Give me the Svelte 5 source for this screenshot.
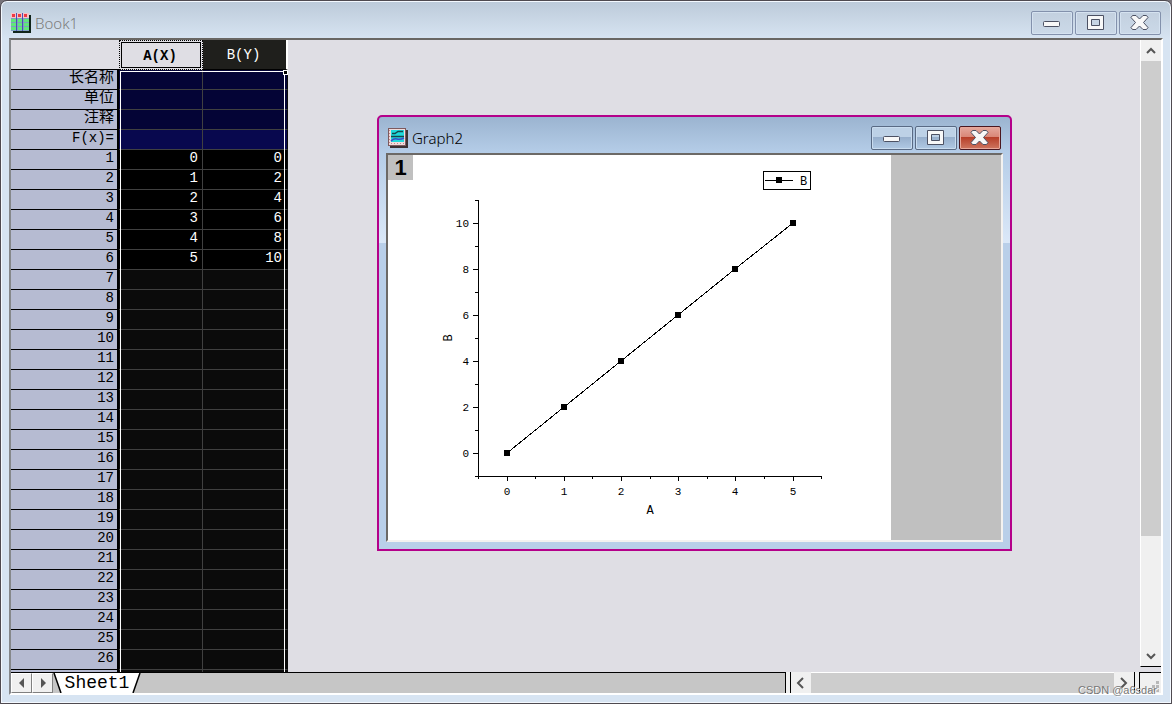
<script>
  const labels = ['长名称', '单位', '注释', 'F(x)='];
  const points = [[0, 0], [1, 2], [2, 4], [3, 6], [4, 8], [5, 10]];
  const rows = Array.from({ length: 26 }, (_, i) => ({ n: i + 1, x: points[i]?.[0] ?? '', y: points[i]?.[1] ?? '' }));

  const px = (v) => Math.floor(119 + v * 57.2);
  const py = (v) => 298 - v * 23;
  const line = points.map(([x, y]) => `${px(x)},${py(y)}`).join(' ');
  const xMinor = [-0.5, 0.5, 1.5, 2.5, 3.5, 4.5, 5.5].map(px);
  const yMinor = [-1, 1, 3, 5, 7, 9, 11];
</script>

{#snippet caption(active)}
  <div class="caption" class:active>
    <button aria-label="Minimize">
      <svg width="24" height="20" viewBox="0 0 24 20"><rect x="3.5" y="8.5" width="16" height="5" rx="1" fill="#f8f8f8" stroke="#4c5163" /></svg>
    </button>
    <button aria-label="Maximize">
      <svg width="24" height="20" viewBox="0 0 24 20">
        <path d="M3.500 2.500h16v14h-16zM7.500 6.500v6h8v-6z" fill="#f8f8f8" fill-rule="evenodd" stroke="#4c5163" stroke-linejoin="round" />
      </svg>
    </button>
    <button class="close" aria-label="Close">
      <svg width="24" height="20" viewBox="0 0 24 20"><path d="M4.500 2.500h3.500l3.500 3.500 3.500-3.500h3.500l1.500 2-4.500 5 4.500 5-1.500 2h-3.500l-3.500-3.500-3.500 3.500h-3.500l-1.500-2 4.500-5-4.500-5z" fill="#f8f8f8" stroke="#4c5163" stroke-linejoin="round" /></svg>
    </button>
  </div>
{/snippet}

{#snippet chevron(d)}
  <svg width="12" height="12" viewBox="0 0 12 12"><path {d} fill="none" stroke="#555" stroke-width="2" /></svg>
{/snippet}

<main class="book">
  <header class="title">
    <svg class="icon" width="20" height="20" viewBox="0 0 20 20">
      <path d="M2 2h18v18H2z" fill="#10241a" />
      <path d="M0 0h18v18H0z" fill="#7f9fc0" />
      <path d="M0 0h18v5H0z" fill="#f6c4c8" />
      <path d="M1 1h3v3H1zM7 1h3v3H7zM13 1h3v3h-3z" fill="#ee3a44" />
      <path d="M0 6h5v3H0zM7 6h4v3H7zM13 6h5v3h-5zM0 10h5v3H0zM7 10h4v3H7zM13 10h5v3h-5zM0 14h5v3H0zM7 14h4v3H7zM13 14h5v3h-5z" fill="#5fe87a" />
      <path d="M5.500 0v18M11.500 0v18" stroke="#4a50b4" />
    </svg>
    <h1>Book1</h1>
    {@render caption(false)}
  </header>

  <div class="client">
    <div class="work">
      <div class="sheet">
        <table>
          <thead>
            <tr><th class="corner"></th><th class="col picked">A(X)</th><th class="col">B(Y)</th></tr>
          </thead>
          <tbody>
            {#each labels as label, i}
              <tr class="meta" class:formula={i === 3}><th>{label}</th><td></td><td></td></tr>
            {/each}
            {#each rows as row}
              <tr class:filled={row.x !== ''}><th>{row.n}</th><td>{row.x}</td><td>{row.y}</td></tr>
            {/each}
            <tr><th></th><td></td><td></td></tr>
          </tbody>
        </table>
        <div class="selection"><i></i></div>
      </div>

      <section class="graph">
        <header class="title">
          <svg class="icon" width="20" height="20" viewBox="0 0 20 20">
            <path d="M2 2h18v18H2z" fill="#3c3234" />
            <path d="M0 0h18v18H0z" fill="#7d5a5e" />
            <path d="M1 1h16v16H1z" fill="#f0dcdc" />
            <path d="M3 2h13v6H3zM3 9h13v5H3z" fill="#1fd9dc" />
            <path d="M4 5.500h3l3-2h5M3 8.500h13" fill="none" stroke="#17474c" stroke-width="1.500" />
            <path d="M3 13q3-3 6-2t7-1" fill="none" stroke="#3c4cc8" stroke-width="1.500" />
            <path d="M1.500 2v14M3 15.500h13" stroke="#c4868a" stroke-dasharray="1 2" />
          </svg>
          <h2>Graph2</h2>
          {@render caption(true)}
        </header>
        <div class="canvas">
          <span class="layer">1</span>
          <svg class="plot" width="503" height="385" viewBox="0 0 503 385" role="img" aria-label="B against A">
            <g stroke="#000" fill="none" shape-rendering="crispEdges">
              <path d="M90.500 45v277M90 321.500h344" />
              {#each yMinor as v}<path d={`M87 ${py(v) + 0.5}h4`} />{/each}
              {#each xMinor as v}<path d={`M${v + 0.5} 321v3`} />{/each}
              {#each points as [x, y]}
                <path d={`M85 ${py(y) + 0.5}h6M${px(x) + 0.5} 321v5`} />
              {/each}
              <rect x="375.500" y="16.500" width="47" height="18" />
              <path d="M377 25.500h28" />
              <polyline points={line} />
            </g>
            {#each points as [x, y]}
              <rect x={px(x) - 3} y={py(y) - 3} width="6" height="6" />
              <text class="tick" x={px(x)} y="340" text-anchor="middle">{x}</text>
              <text class="tick" x="81" y={py(y) + 4} text-anchor="end">{y}</text>
            {/each}
            <rect x="388" y="22" width="6" height="6" />
            <text x="412" y="30">B</text>
            <text x="262" y="359" text-anchor="middle">A</text>
            <text transform="translate(64 183) rotate(-90)" text-anchor="middle">B</text>
          </svg>
        </div>
      </section>

      <div class="vbar">
        <button aria-label="Scroll up">{@render chevron('M2 8l4-4 4 4')}</button>
        <div class="thumb"></div>
        <button aria-label="Scroll down">{@render chevron('M2 4l4 4 4-4')}</button>
      </div>
    </div>

    <footer>
      <div class="tabs">
        <button class="nav" aria-label="Previous sheet"><svg width="6" height="10" viewBox="0 0 6 10"><path d="M5 0v10L0 5z" fill="#555" /></svg></button>
        <button class="nav" aria-label="Next sheet"><svg width="6" height="10" viewBox="0 0 6 10"><path d="M1 0v10l5-5z" fill="#555" /></svg></button>
        <button class="tab">
          <svg width="88" height="20" viewBox="0 0 88 20"><path d="M1 0l7 20h72l7-20z" fill="#fff" /><path d="M1 0l7 20M80 20l7-20" stroke="#000" stroke-width="1.500" /></svg>
          <span>Sheet1</span>
        </button>
      </div>
      <div class="hbar">
        <button aria-label="Scroll left">{@render chevron('M8 1L3 6l5 5')}</button>
        <div class="track"></div>
        <button aria-label="Scroll right">{@render chevron('M3 1l5 5-5 5')}</button>
      </div>
      <div class="grip">
        <svg width="11" height="11" viewBox="0 0 11 11"><path d="M8 0h3v3H8zM8 4h3v3H8zM8 8h3v3H8zM4 4h3v3H4zM4 8h3v3H4zM0 8h3v3H0z" fill="#b8b8b8" /></svg>
      </div>
    </footer>
  </div>
  <p class="credit">CSDN @a6sdar</p>
</main>

<style>
  :global(body) { margin: 0; background: #77737a; }
  * { box-sizing: border-box; }
  button { padding: 0; margin: 0; border: 0; display: grid; place-items: center; font: inherit; }
  svg { display: block; }
  h1, h2, p { margin: 0; }

  .book {
    position: relative; display: flex; flex-direction: column; height: 100vh;
    padding: 0 8px; overflow: hidden;
    border: 1px solid #4f4a50; border-radius: 7px 7px 0 0;
    box-shadow: inset 0 0 0 1px #f4f9ff;
    background: linear-gradient(#bccad9, #d7e4f2 38px);
    font-family: "Liberation Mono", "Noto Sans CJK SC", monospace;
  }
  .title { display: flex; align-items: center; height: 37px; flex: none; padding: 6px 2px 0 2px; gap: 4px; }
  .title h1, .title h2 { flex: 1; font: 300 15px/20px "Noto Sans", "Open Sans", sans-serif; color: #7c7c7c; }
  .title h2 { color: #000; }

  .caption { display: flex; gap: 2px; }
  .caption button {
    width: 42px; height: 24px; border: 1px solid #8391ac; border-radius: 2px;
    background: linear-gradient(#c3d0df, #cbd9e8);
    box-shadow: inset 0 0 0 1px #d5e2f0;
  }
  .caption.active button {
    border-color: #596a84; background: linear-gradient(#bdd1e6 45%, #96aecb 45%, #b0c9e4);
    box-shadow: inset 0 0 0 1px #c9dcef;
  }
  .caption.active .close {
    border-color: #4a1720; background: linear-gradient(#e5a99e, #d98677 45%, #b63c27 45%, #cf7660);
    box-shadow: inset 0 0 0 1px #e8a79a;
  }

  .client {
    flex: 1; min-height: 0; display: flex; flex-direction: column; margin-bottom: 8px;
    border: 2px solid; border-color: #696764 #fff #fff #85878a;
  }
  .work { position: relative; flex: 1; min-height: 0; display: flex; overflow: hidden; background: #dfdee4; }

  .sheet { position: relative; flex: none; overflow: hidden; background: #0b0b0b; width: 277px; }
  table { border-collapse: separate; border-spacing: 0; table-layout: fixed; width: 277px; font-size: 14px; line-height: 17px; }
  th, td { height: 20px; padding: 0 4px 2px 0; text-align: right; font-weight: 400; white-space: nowrap; }
  tbody th { padding-right: 3px; background: #b6bbd2; border-bottom: 1px solid #000; border-right: 2px solid #000; }
  .meta th { font-size: 15px; }
  .meta.formula th { font-size: 14px; }
  td { color: #fff; border-bottom: 1px solid #404040; border-right: 1px solid #404040; }
  td:last-child { padding-right: 5px; border-right-color: #0b0b0b; }
  .filled td { background: #000; }
  .meta td { background: #040436; }
  .meta.formula td { background: #08084e; }
  thead th { height: 30px; padding: 2px 2px 0 0; text-align: center; border-bottom: 1px solid #000; }
  .corner { width: 108px; background: #dfdee4; }
  .col { background: #1f1f1c; color: #fff; border-right: 2px solid #fff; }
  .col.picked { width: 84px; background: #dfdee4; color: #000; font-weight: 700; border: 1px dotted #000; outline: 1px solid #000; outline-offset: -3px; }
  .selection { position: absolute; inset: 31px 3px 0 109px; border: 1px solid #fff; border-bottom: 0; }
  .selection i { position: absolute; top: -2px; right: -4px; width: 5px; height: 5px; background: #000; border: 1px solid #fff; }

  .graph {
    position: absolute; left: 366px; top: 75px; width: 635px; height: 436px;
    display: flex; flex-direction: column; padding: 0 8px 8px;
    border: 2px solid #b4008a; border-radius: 5px 5px 0 0;
    background: linear-gradient(#9bb4d0, #b5cde8 36px, #dbe8f8 126px, #b9cfe9 126px);
  }
  .graph .title { height: 36px; padding: 6px 1px 0 1px; }
  .canvas {
    position: relative; flex: 1; display: flex; background: #c0c0c0;
    margin: 0 -1px; border: 2px solid; border-color: #6c6966 #f4f2f0 #f4f2f0 #6c6966;
  }
  .plot { background: #fff; }
  .plot text { font-size: 12px; }
  .plot .tick { font-size: 11px; }
  .layer { position: absolute; width: 25px; height: 25px; background: #c0c0c0; font: 700 22px/25px "Liberation Sans", sans-serif; text-align: center; }

  .vbar { flex: none; width: 21px; margin-left: auto; display: flex; flex-direction: column; background: #f0f0f0; border-left: 1px solid #fff; border-bottom: 1px solid #000; height: calc(100% - 5px); }
  .vbar button { height: 21px; background: #f0f0f0; flex: none; }
  .vbar .thumb { height: 475px; background: #cdcdcd; margin-bottom: auto; }

  footer { flex: none; display: flex; height: 21px; background: #f0f0f0; }
  .tabs { flex: 1; display: flex; background: #c6c6c6; border: solid #000; border-width: 1px 1px 0 0; margin-right: 4px; }
  .nav { width: 21px; background: #f0f0f0; border: 1px solid; border-color: #fff #808080 #808080 #fff; }
  .tab { background: none; font-size: 18px; line-height: 20px; }
  .tab svg, .tab span { grid-area: 1 / 1; }
  .hbar { width: 30%; display: flex; border: solid #000; border-width: 0 1px; }
  .hbar button { width: 20px; background: #f0f0f0; }
  .hbar .track { flex: 1; background: #cdcdcd; border-top: 1px solid #fff; }
  .grip { width: 22px; margin-left: 4px; padding: 8px 2px 0 8px; border: solid #000; border-width: 1px 0 0 1px; }
  .credit { position: absolute; right: 14px; bottom: 6px; font: 11px/14px "Liberation Sans", sans-serif; color: #777; text-shadow: 1px 1px #fff; }
</style>
